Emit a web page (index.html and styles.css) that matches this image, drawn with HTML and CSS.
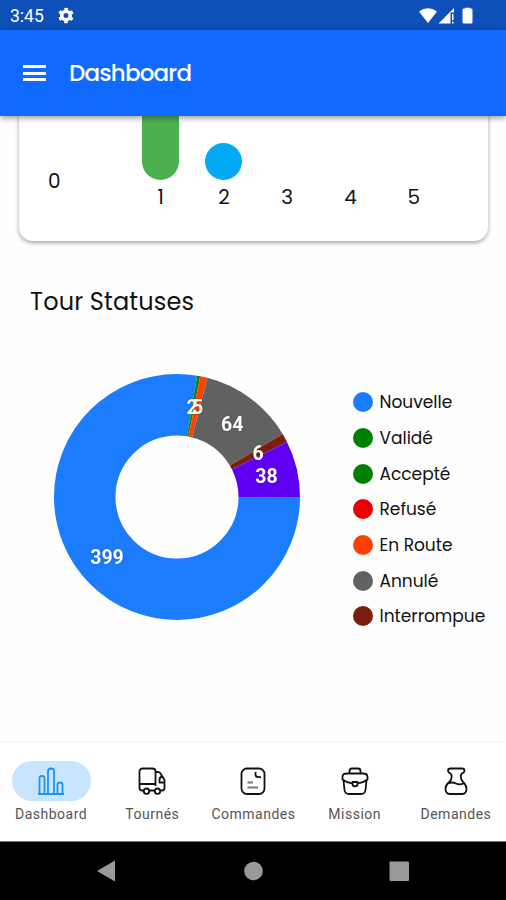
FILE: index.html
```html
<!DOCTYPE html>
<html lang="fr">

<head>
  <meta charset="UTF-8">
  <title>Dashboard</title>
  <link rel="stylesheet" href="styles.css">
</head>

<body>
  <div class="status-bar">
    <span class="time">3:45</span>
    <svg class="gear" width="16" height="17" viewBox="0 0 16 17">
      <circle cx="8" cy="8.5" r="4.3" fill="none" stroke="#fff" stroke-width="3.6" />
      <circle cx="8" cy="8.5" r="6.7" fill="none" stroke="#fff" stroke-width="2.2" stroke-dasharray="3.5 3.516" stroke-dashoffset="1.75" transform="rotate(30 8 8.5)" />
    </svg>
    <svg class="signals" width="55" height="18" viewBox="0 0 55 18">
      <path d="M0 4.5Q9 -2 18 4.5L9 16Z" fill="#fff" />
      <path d="M19.5 16.5L35 1V5.5H31.5V16.5Z" fill="#fff" />
      <path d="M33 7h1.5v6H33zM33 14.5h1.5v2H33z" fill="#fff" />
      <path d="M46 1.5V.8h5v.7h1.2q1.3 0 1.3 1.3v12.4q0 1.3-1.3 1.3h-7.4q-1.3 0-1.3-1.3V2.8q0-1.3 1.3-1.3Z" fill="#fff" />
    </svg>
  </div>

  <header class="app-bar">
    <button class="menu" type="button" aria-label="Menu"><i></i><i></i><i></i></button>
    <h1>Dashboard</h1>
  </header>

  <main>
    <section class="card">
      <span class="axis-y">0</span>
      <div class="bars">
        <div class="col"><div class="bar green"></div><span>1</span></div>
        <div class="col"><div class="bar blue"></div><span>2</span></div>
        <div class="col"><span>3</span></div>
        <div class="col"><span>4</span></div>
        <div class="col"><span>5</span></div>
      </div>
    </section>

    <h2>Tour Statuses</h2>

    <section class="statuses">
      <svg class="donut" width="246" height="246" viewBox="0 0 246 246">
        <g fill="none" stroke-width="61.5">
          <circle cx="123" cy="123" r="92.25" pathLength="514" stroke="#1b7dfd" stroke-dasharray="399 514" />
          <circle cx="123" cy="123" r="92.25" pathLength="514" stroke="#0b8020" stroke-dasharray="2 514" stroke-dashoffset="-399" />
          <circle cx="123" cy="123" r="92.25" pathLength="514" stroke="#ff4000" stroke-dasharray="5 514" stroke-dashoffset="-401" />
          <circle cx="123" cy="123" r="92.25" pathLength="514" stroke="#616161" stroke-dasharray="64 514" stroke-dashoffset="-406" />
          <circle cx="123" cy="123" r="92.25" pathLength="514" stroke="#7a1f0b" stroke-dasharray="6 514" stroke-dashoffset="-470" />
          <circle cx="123" cy="123" r="92.25" pathLength="514" stroke="#5f00f5" stroke-dasharray="38 514" stroke-dashoffset="-476" />
        </g>
        <g class="values">
          <text x="53" y="189.5">399</text>
          <text x="138" y="39.5">2</text>
          <text x="143.5" y="39.5">5</text>
          <text x="178.3" y="56.5">64</text>
          <text x="204" y="86">6</text>
          <text x="212.5" y="108.5">38</text>
        </g>
      </svg>
      <ul class="legend">
        <li><i class="dot nouvelle"></i>Nouvelle</li>
        <li><i class="dot valide"></i>Validé</li>
        <li><i class="dot accepte"></i>Accepté</li>
        <li><i class="dot refuse"></i>Refusé</li>
        <li><i class="dot en-route"></i>En Route</li>
        <li><i class="dot annule"></i>Annulé</li>
        <li><i class="dot interrompue"></i>Interrompue</li>
      </ul>
    </section>
  </main>

  <nav class="tabs">
    <a class="tab active">
      <span class="icon"><svg width="28" height="28" viewBox="0 0 28 28">
        <path d="M1 27H27M2.500 27V11Q2.500 9 5 9T7.500 11V27M11 27V4Q11 1.500 14 1.500T17 4V27M20.500 27V17.500Q20.500 15.500 23 15.500T25.500 17.500V27" />
      </svg></span>
      <span>Dashboard</span>
    </a>
    <a class="tab">
      <span class="icon"><svg width="28" height="28" viewBox="0 0 28 28">
        <path d="M5 23.500H4Q1.500 23.500 1.500 21V5Q1.500 1.500 5 1.500H14.500Q17.500 1.500 17.500 4.500V17H1.500M17.500 5H20Q22 5 22.800 7L26.500 13V21Q26.500 23.500 24 23.500H23M11.500 23.500H16.500M17.500 17V19M24.500 9.500Q21.500 10 21.500 12.500V15.500H26.500" />
        <circle cx="8.500" cy="24.200" r="2.700" /><circle cx="19.500" cy="24.200" r="2.700" />
      </svg></span>
      <span>Tournés</span>
    </a>
    <a class="tab">
      <span class="icon"><svg width="28" height="28" viewBox="0 0 28 28">
        <rect x="2.500" y="1.500" width="23" height="25.500" rx="5.500" />
        <path d="M16.500 5V7.500Q16.500 10.200 19.500 10.200H22" />
        <path class="thin" d="M8.500 15.500H14M8.500 20.500H19" />
      </svg></span>
      <span>Commandes</span>
    </a>
    <a class="tab">
      <span class="icon"><svg width="28" height="28" viewBox="0 0 28 28">
        <path d="M8.500 6V4Q8.500 1.500 11 1.500H17Q19.500 1.500 19.500 4V6M6 6.500H22Q26.500 6.500 26.500 10V12.500Q22 16 17 16.300M11 16.300Q6 16 1.500 12.500V10Q1.500 6.500 6 6.500M2.500 13.500L3.500 23Q4 27 8 27H20Q24 27 24.500 23L25.500 13.500M11.500 15H16.500V17Q16.500 19.300 14 19.300T11.500 17Z" />
      </svg></span>
      <span>Mission</span>
    </a>
    <a class="tab">
      <span class="icon"><svg width="28" height="28" viewBox="0 0 28 28">
        <path d="M8.500 1.500H20Q22.500 1.500 22.500 3.800Q22.500 5.500 20 6.500Q18.800 7.500 18.800 9.500Q18.800 12.500 21 14.800Q24.500 18 24.500 21.500Q24.500 27 20 27H8Q3.500 27 3.500 21.500Q3.500 18 7.500 14.800Q9.700 12.500 9.700 9.500Q9.700 7.500 8.500 6.500Q6 5.500 6 3.800Q6 1.500 8.500 1.500ZM6 16.500Q10 14.500 14 16.500T22 16" />
      </svg></span>
      <span>Demandes</span>
    </a>
  </nav>

  <div class="system-nav">
    <svg width="58" height="58" viewBox="0 0 58 58"><path d="M19 29L37 18.500V39.500Z" /></svg>
    <svg width="58" height="58" viewBox="0 0 58 58"><circle cx="29.500" cy="29" r="9.300" /></svg>
    <svg width="58" height="58" viewBox="0 0 58 58"><rect x="19.500" y="19.500" width="19.500" height="19.500" rx="1" /></svg>
  </div>
</body>

</html>
```
FILE: styles.css
```css
* {
  box-sizing: border-box;
}

body {
  margin: 0;
  width: 506px;
  height: 900px;
  display: flex;
  flex-direction: column;
  overflow: hidden;
  background: #fefefe;
  color: #111;
  font-family: Poppins, Inter, sans-serif;
}

.status-bar {
  flex: 0 0 30px;
  display: flex;
  align-items: center;
  padding: 1px 32px 0 10px;
  background: #0d50b8;
  color: #fff;
}

.time {
  width: 48px;
  font: 17.5px Roboto, sans-serif;
}

.signals {
  margin-left: auto;
}

.app-bar {
  flex: 0 0 86px;
  display: flex;
  align-items: center;
  padding-left: 23px;
  background: #106aff;
  color: #fff;
  box-shadow: 0 2px 6px rgba(0, 0, 0, 0.4);
  z-index: 1;
}

.menu {
  display: flex;
  flex-direction: column;
  gap: 3.5px;
  padding: 0;
  border: none;
  background: none;
}

.menu i {
  width: 23px;
  height: 3px;
  background: #fff;
}

h1 {
  margin: 0 0 0 23px;
  font-size: 23px;
  font-weight: 500;
  letter-spacing: -0.8px;
}

main {
  flex: 1;
  min-height: 0;
  overflow: hidden;
}

.card {
  display: flex;
  width: 469px;
  height: 145px;
  margin: -20px 0 0 19px;
  border-radius: 14px;
  background: #fff;
  box-shadow: 0 2px 4px rgba(0, 0, 0, 0.35);
  font-size: 20px;
}

.axis-y {
  width: 90px;
  padding: 70px 0 0 29px;
}

.bars {
  display: grid;
  grid-template-columns: repeat(5, 63.3px);
  margin-left: 20px;
  height: 111px;
}

.col {
  display: flex;
  flex-direction: column;
  justify-content: flex-end;
  align-items: center;
  line-height: 26px;
}

.col span {
  margin-top: 4px;
  height: 27px;
}

.bar {
  width: 37px;
  height: 37px;
  border-radius: 19px;
}

.green {
  height: 84px;
  background: #4caf50;
}

.blue {
  background: #03a9f4;
}

h2 {
  margin: 44px 0 0 30px;
  font-size: 24px;
  font-weight: 400;
  line-height: 34px;
  letter-spacing: 0.15px;
}

.statuses {
  display: flex;
  margin: 55px 0 0 53.5px;
}

.values {
  fill: #fff;
  font: bold 19.5px Roboto, sans-serif;
  text-anchor: middle;
  filter: drop-shadow(0 0 1px rgba(0, 0, 0, 0.3));
}

.legend {
  margin: 10.5px 0 0 53px;
  padding: 0;
  list-style: none;
  font-size: 17px;
}

.legend li {
  display: flex;
  align-items: center;
  height: 35.7px;
  white-space: nowrap;
}

.dot {
  width: 20px;
  height: 20px;
  margin-right: 7px;
  border-radius: 50%;
}

.nouvelle {
  background: #1b7dfd;
}

.valide,
.accepte {
  background: #008000;
}

.refuse {
  background: #e90000;
}

.en-route {
  background: #ff4000;
}

.annule {
  background: #616161;
}

.interrompue {
  background: #7a1f0b;
}

.tabs {
  flex: 0 0 99px;
  display: grid;
  grid-template-columns: repeat(5, 1fr);
  border-bottom: 1px solid #777;
  background: #fff;
  box-shadow: 0 0 4px rgba(0, 0, 0, 0.08);
}

.tab {
  display: flex;
  flex-direction: column;
  align-items: center;
  padding: 18px 0 0 1px;
  color: #555;
  font: 14px/20px Roboto, sans-serif;
  letter-spacing: 0.5px;
}

.icon {
  display: flex;
  align-items: center;
  justify-content: center;
  width: 79px;
  height: 40px;
  margin-bottom: 3px;
  border-radius: 20px;
}

.icon svg {
  fill: none;
  stroke: #111;
  stroke-width: 1.8;
  stroke-linejoin: round;
}

.icon .thin {
  stroke: #777;
}

.active .icon {
  background: #c8e4ff;
}

.active svg {
  stroke: #1b92f5;
}

.system-nav {
  flex: 0 0 58px;
  display: flex;
  justify-content: space-between;
  padding: 0 78px;
  background: #000;
  fill: #999;
}
```
